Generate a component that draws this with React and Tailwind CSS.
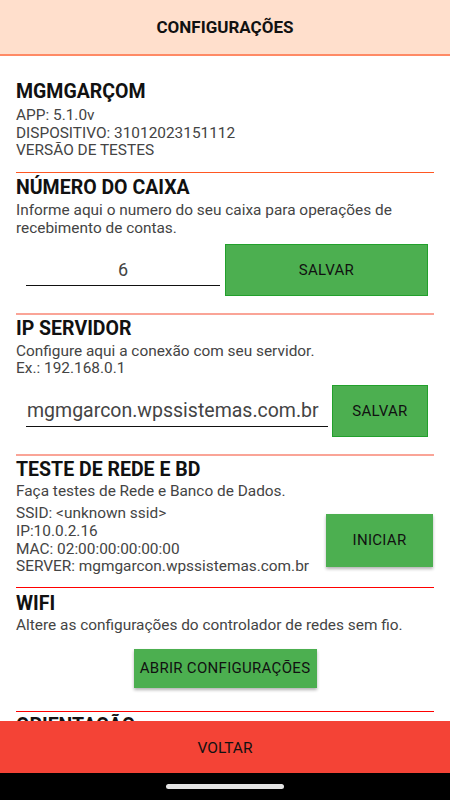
const font = { fontFamily: 'Roboto, "Noto Sans", Arial, sans-serif' };

function Divider({ color, thick }) {
  return <div className={`${thick ? 'h-[1.5px]' : 'h-px'} ${color}`} />;
}

function Heading({ children, className = '' }) {
  return (
    <h2 className={`text-[19.5px] leading-[21px] font-bold text-[#111] ${className}`}>{children}</h2>
  );
}

export default function App() {
  return (
    <div className="w-[450px] h-[800px] flex flex-col bg-white overflow-hidden" style={font}>
      <header className="h-[56px] shrink-0 bg-[#FFDFCC] border-b-2 border-[#FF8A65] flex items-center justify-center pt-[2px]">
        <h1 className="text-[17px] font-bold text-[#111]">CONFIGURAÇÕES</h1>
      </header>

      <main className="flex-1 overflow-hidden px-4">
        {/* app info */}
        <div className="pt-[25px]">
          <h2 className="text-[19.5px] leading-[22px] font-bold text-[#111]">MGMGARÇOM</h2>
          <div className="mt-[4px] text-[15.4px] leading-[17.5px] text-[#444]">
            <p>APP: 5.1.0v</p>
            <p>DISPOSITIVO: 31012023151112</p>
            <p>VERSÃO DE TESTES</p>
          </div>
        </div>
        <div className="mt-[12.5px]">
          <Divider color="bg-[#FF5722]" />
        </div>

        {/* numero do caixa */}
        <Heading className="mt-[4px]">NÚMERO DO CAIXA</Heading>
        <p className="mt-[4px] text-[15.4px] leading-[17.5px] text-[#444]">
          Informe aqui o numero do seu caixa para operações de recebimento de contas.
        </p>
        <div className="mt-[7px] flex items-start">
          <div className="ml-[10px] mt-[10px] w-[194px] h-[32px] border-b-[1.5px] border-[#111] flex items-center justify-center text-[18px] text-[#444]">
            6
          </div>
          <button className="ml-[5px] w-[203px] h-[52px] bg-[#4CAF50] border border-[#22A02C] text-[15px] tracking-[0.3px] text-[#111]">
            SALVAR
          </button>
        </div>
        <div className="mt-[17px]">
          <Divider color="bg-[#FAA497]" thick />
        </div>

        {/* ip servidor */}
        <Heading className="mt-[3px]">IP SERVIDOR</Heading>
        <div className="mt-[4px] text-[15.4px] leading-[17.5px] text-[#444]">
          <p>Configure aqui a conexão com seu servidor.</p>
          <p>Ex.: 192.168.0.1</p>
        </div>
        <div className="mt-[7.5px] flex items-start">
          <div className="ml-[10px] mt-[10px] w-[302px] h-[32px] border-b-[1.5px] border-[#111] flex items-center pl-[1px] text-[19.5px] text-[#444] whitespace-nowrap overflow-hidden">
            mgmgarcon.wpssistemas.com.br
          </div>
          <button className="ml-[4px] w-[96px] h-[52px] bg-[#4CAF50] border border-[#22A02C] text-[15px] tracking-[0.3px] text-[#111]">
            SALVAR
          </button>
        </div>
        <div className="mt-[17px]">
          <Divider color="bg-[#FAA497]" thick />
        </div>

        {/* teste de rede */}
        <Heading className="mt-[3px]">TESTE DE REDE E BD</Heading>
        <p className="mt-[3px] text-[15.4px] leading-[17.5px] text-[#444]">Faça testes de Rede e Banco de Dados.</p>
        <div className="mt-[5px] flex items-center">
          <div className="flex-1 text-[15.4px] leading-[17.8px] text-[#444]">
            <p>SSID: &lt;unknown ssid&gt;</p>
            <p>IP:10.0.2.16</p>
            <p>MAC: 02:00:00:00:00:00</p>
            <p>SERVER: mgmgarcon.wpssistemas.com.br</p>
          </div>
          <button className="mr-px w-[107px] h-[53px] bg-[#4CAF50] shadow-[0_2px_3px_rgba(0,0,0,0.3)] text-[15px] tracking-[0.3px] text-[#111]">
            INICIAR
          </button>
        </div>
        <div className="mt-[11px]">
          <Divider color="bg-[#FF0000]" />
        </div>

        {/* wifi */}
        <Heading className="mt-[5px]">WIFI</Heading>
        <p className="mt-[3px] text-[15.4px] leading-[17.5px] text-[#444]">
          Altere as configurações do controlador de redes sem fio.
        </p>
        <div className="mt-[14px] flex justify-center">
          <button className="w-[183px] h-[39px] bg-[#4CAF50] shadow-[0_2px_3px_rgba(0,0,0,0.3)] text-[15px] tracking-[0.3px] text-[#111]">
            ABRIR CONFIGURAÇÕES
          </button>
        </div>
        <div className="mt-[23px]">
          <Divider color="bg-[#FF0000]" />
        </div>

        <Heading className="mt-[3px]">ORIENTAÇÃO</Heading>
      </main>

      <button className="h-[52px] shrink-0 bg-[#F44336] pt-[3px] text-[15.5px] text-[#111]">VOLTAR</button>
      <div className="h-[27px] shrink-0 bg-black flex items-center justify-center">
        <div className="w-[118px] h-[5px] rounded-full bg-[#E4E4E4]" />
      </div>
    </div>
  );
}
